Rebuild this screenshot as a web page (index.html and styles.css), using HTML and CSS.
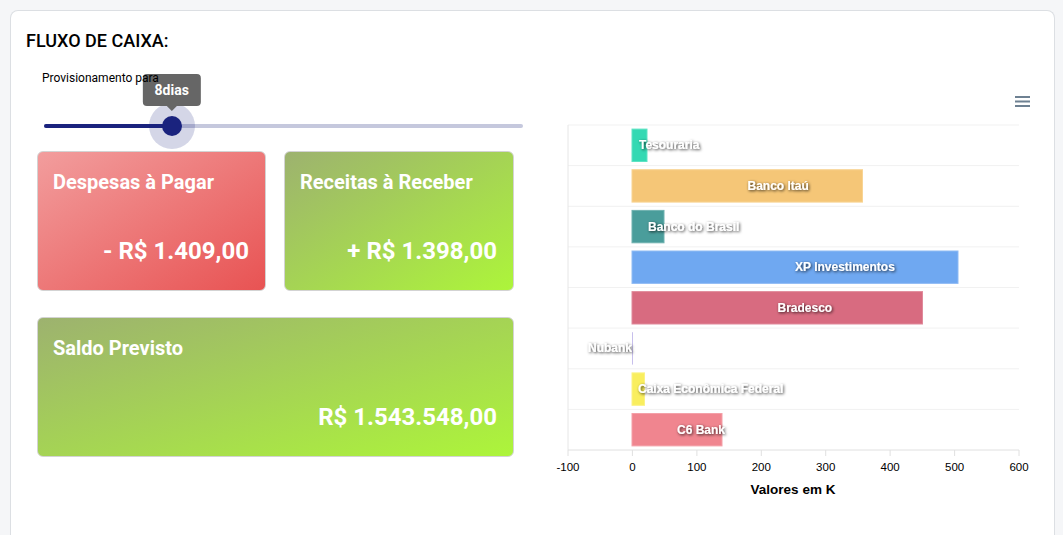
FILE: index.html
```html
<!DOCTYPE html>
<html lang="pt-BR">
<head>
<meta charset="utf-8">
<title>Fluxo de Caixa</title>
<link rel="stylesheet" href="styles.css">
</head>
<body>
<div class="panel">
  <h2 class="panel-title">FLUXO DE CAIXA:</h2>
  <div class="panel-body">
    <div class="left">
      <div class="slider-label">Provisionamento para</div>
      <div class="slider">
        <div class="track"></div>
        <div class="track-active" style="width:26.67%"></div>
        <div class="thumb-wrap" style="left:26.67%">
          <div class="halo"></div>
          <div class="thumb"></div>
          <div class="tip">8dias</div>
        </div>
      </div>
      <div class="cards">
        <div class="stat red">
          <div class="stat-title">Despesas à Pagar</div>
          <div class="stat-value">- R$ 1.409,00</div>
        </div>
        <div class="stat green">
          <div class="stat-title">Receitas à Receber</div>
          <div class="stat-value">+ R$ 1.398,00</div>
        </div>
        <div class="stat green wide">
          <div class="stat-title">Saldo Previsto</div>
          <div class="stat-value">R$ 1.543.548,00</div>
        </div>
      </div>
    </div>
    <div class="right">
      <svg class="chart" width="498" height="473" viewBox="540 52 498 473" xmlns="http://www.w3.org/2000/svg">
        <defs>
          <filter id="sh" x="-20%" y="-50%" width="140%" height="200%">
            <feDropShadow dx="1" dy="1" stdDeviation="1.4" flood-color="#000" flood-opacity="0.8"/>
          </filter>
        </defs>
        <g class="menu" fill="#6e8192">
          <rect x="1015" y="96" width="15" height="2"/>
          <rect x="1015" y="100.5" width="15" height="2"/>
          <rect x="1015" y="105" width="15" height="2"/>
        </g>
        <g stroke="#f1f1f1" stroke-width="1">
          <line x1="568" y1="125" x2="1019" y2="125"/>
          <line x1="568" y1="165.6" x2="1019" y2="165.6"/>
          <line x1="568" y1="206.3" x2="1019" y2="206.3"/>
          <line x1="568" y1="246.9" x2="1019" y2="246.9"/>
          <line x1="568" y1="287.5" x2="1019" y2="287.5"/>
          <line x1="568" y1="328.1" x2="1019" y2="328.1"/>
          <line x1="568" y1="368.8" x2="1019" y2="368.8"/>
          <line x1="568" y1="409.4" x2="1019" y2="409.4"/>
        </g>
        <line x1="568" y1="125" x2="568" y2="450" stroke="#e6e6e6"/>
        <g stroke-width="1">
          <rect x="632" y="129.1" width="15" height="32.4" fill="#34d9b3" stroke="#5ee3c4"/>
          <rect x="632" y="169.7" width="230.5" height="32.4" fill="#f5c677" stroke="#f8d494"/>
          <rect x="632" y="210.4" width="32" height="32.4" fill="#4a9d9b" stroke="#6fb2b0"/>
          <rect x="632" y="251" width="326" height="32.4" fill="#6fa8f1" stroke="#8fbbf4"/>
          <rect x="632" y="291.6" width="290.5" height="32.4" fill="#d86b80" stroke="#e08a9b"/>
          <rect x="632" y="332.2" width="0.8" height="32.4" fill="#b9b0e8"/>
          <rect x="632" y="372.9" width="12.5" height="32.4" fill="#f9ee5e" stroke="#fbf284"/>
          <rect x="632" y="413.5" width="90" height="32.4" fill="#f0858f" stroke="#f4a0a8"/>
        </g>
        <g class="dl" filter="url(#sh)">
          <text x="639" y="145.3">Tesouraria</text>
          <text x="747.5" y="186">Banco Itaú</text>
          <text x="648" y="226.6">Banco do Brasil</text>
          <text x="795" y="267.2">XP Investimentos</text>
          <text x="777.5" y="307.8">Bradesco</text>
          <text x="632" y="348.4" text-anchor="end">Nubank</text>
          <text x="638" y="389">Caixa Econômica Federal</text>
          <text x="677" y="429.7">C6 Bank</text>
        </g>
        <line x1="568" y1="450" x2="1019" y2="450" stroke="#e0e0e0"/>
        <g stroke="#e0e0e0">
          <line x1="568" y1="450" x2="568" y2="456"/>
          <line x1="632.4" y1="450" x2="632.4" y2="456"/>
          <line x1="696.9" y1="450" x2="696.9" y2="456"/>
          <line x1="761.3" y1="450" x2="761.3" y2="456"/>
          <line x1="825.7" y1="450" x2="825.7" y2="456"/>
          <line x1="890.1" y1="450" x2="890.1" y2="456"/>
          <line x1="954.6" y1="450" x2="954.6" y2="456"/>
          <line x1="1019" y1="450" x2="1019" y2="456"/>
        </g>
        <g class="tick">
          <text x="568" y="467.3">-100</text>
          <text x="632.4" y="467.3">0</text>
          <text x="696.9" y="467.3">100</text>
          <text x="761.3" y="467.3">200</text>
          <text x="825.7" y="467.3">300</text>
          <text x="890.1" y="467.3">400</text>
          <text x="954.6" y="467.3">500</text>
          <text x="1019" y="467.3">600</text>
        </g>
        <text class="axis-title" x="793" y="489">Valores em K</text>
      </svg>
    </div>
  </div>
</div>
</body>
</html>
```

FILE: styles.css
```css
html, body {
  height: 535px;
  overflow: hidden;
}

body {
  margin: 0;
  padding: 10px 8px 0 10px;
  background: #f5f6f8;
  font-family: Roboto, "Liberation Sans", Arial, sans-serif;
  color: #000;
}

.panel {
  width: 1045px;
  height: 525px;
  box-sizing: border-box;
  background: #fff;
  border: 1px solid #dcdfe3;
  border-bottom: none;
  border-radius: 8px 8px 0 0;
  padding: 19px 16px 0 15px;
}

.panel-title {
  margin: 0;
  font-size: 18px;
  font-weight: 500;
  line-height: 22px;
  color: #000;
}

.panel-body {
  display: grid;
  grid-template-columns: 514px 498px;
}

.left {
  padding-top: 19px;
}

.slider-label {
  position: relative;
  z-index: 2;
  font-size: 12px;
  line-height: 14px;
  padding-left: 16px;
}

.slider {
  position: relative;
  height: 46px;
  margin: 18px 17px 0 18px;
}

.track,
.track-active {
  position: absolute;
  left: 0;
  top: 21px;
  height: 4px;
  border-radius: 2px;
}

.track {
  right: 0;
  background: #c5c8dd;
}

.track-active {
  background: #1a237e;
}

.thumb-wrap {
  position: absolute;
  top: 23px;
  width: 0;
  height: 0;
}

.halo {
  position: absolute;
  left: -23px;
  top: -23px;
  width: 46px;
  height: 46px;
  border-radius: 50%;
  background: rgba(26, 35, 126, 0.19);
}

.thumb {
  position: absolute;
  left: -10px;
  top: -10px;
  width: 20px;
  height: 20px;
  border-radius: 50%;
  background: #1a237e;
}

.tip {
  position: absolute;
  left: 0;
  top: -52px;
  transform: translateX(-50%);
  height: 32px;
  line-height: 32px;
  padding: 0 12px;
  background: #666;
  color: #fff;
  font-size: 14px;
  font-weight: 700;
  border-radius: 4px;
  white-space: nowrap;
}

.tip::after {
  content: "";
  position: absolute;
  left: 50%;
  bottom: -5px;
  margin-left: -5px;
  border-left: 5px solid transparent;
  border-right: 5px solid transparent;
  border-top: 5px solid #666;
}

.cards {
  display: grid;
  grid-template-columns: 229px 230px;
  gap: 26px 18px;
  margin: 2px 0 0 11px;
}

.stat {
  height: 140px;
  box-sizing: border-box;
  border: 1px solid #d3d3d3;
  border-radius: 6px;
  padding: 18px 16px 24px 15px;
  display: flex;
  flex-direction: column;
  justify-content: space-between;
  color: #fff;
}

.stat-title {
  font-size: 20px;
  font-weight: 700;
  line-height: 24px;
}

.stat-value {
  font-size: 24px;
  font-weight: 700;
  line-height: 30px;
  text-align: right;
}

.wide {
  grid-column: 1 / span 2;
}

.red {
  background: linear-gradient(to bottom right, #f29d9d, #e85353);
}

.green {
  background: linear-gradient(to bottom right, #9db26f, #adf53a);
}

.chart {
  display: block;
}

.dl text {
  font-family: "Liberation Sans", Arial, sans-serif;
  font-size: 12px;
  font-weight: 700;
  fill: #fff;
  dominant-baseline: central;
}

.tick text {
  font-family: "Liberation Sans", Arial, sans-serif;
  font-size: 11.5px;
  fill: #000;
  text-anchor: middle;
  dominant-baseline: central;
}

.axis-title {
  font-family: "Liberation Sans", Arial, sans-serif;
  font-size: 13.5px;
  font-weight: 700;
  fill: #000;
  text-anchor: middle;
  dominant-baseline: central;
}
```
